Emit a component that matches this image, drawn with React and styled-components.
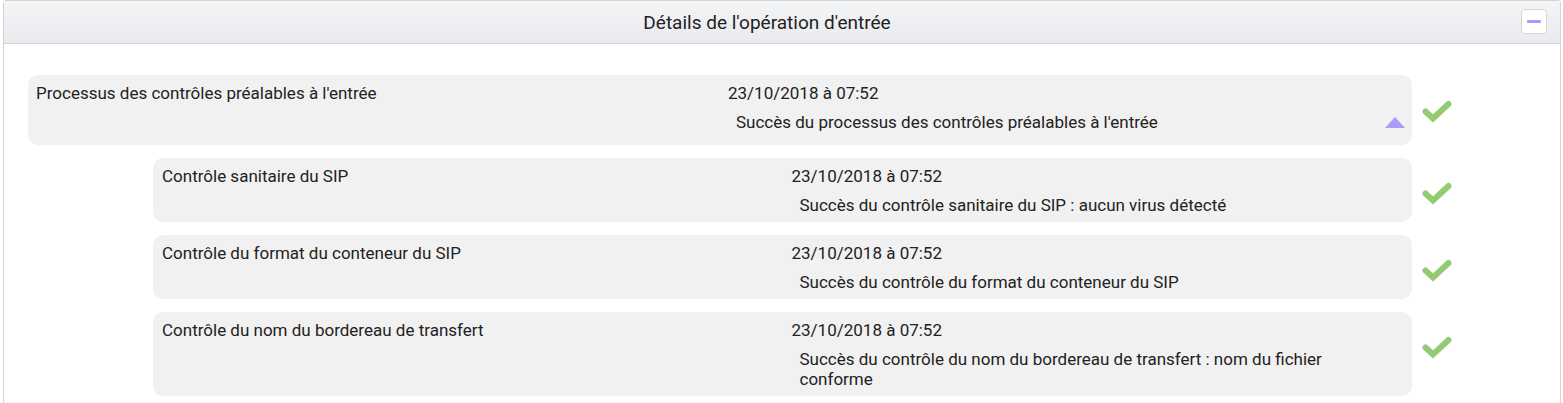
import React from "react";
import styled, { createGlobalStyle } from "styled-components";

const Global = createGlobalStyle`
  html, body { margin: 0; padding: 0; background: #fff; }
  body { font-family: Roboto, "Noto Sans", Arial, sans-serif; color: #222; }
`;

const Panel = styled.section`
  margin: 0 2px 0 3px;
  border: 1px solid #d4d4d4;
  border-radius: 3px 3px 0 0;
  background: #fff;
  min-height: 420px;
`;

const Header = styled.header`
  position: relative;
  height: 42px;
  padding-right: 30px;
  display: flex;
  align-items: center;
  justify-content: center;
  background: linear-gradient(#f4f5f7, #e9eaed);
  border-bottom: 1px solid #d2d2d2;
  font-size: 19px;
  color: #222;
`;

const Toggle = styled.button`
  position: absolute;
  right: 13px;
  top: 8px;
  width: 26px;
  height: 25px;
  padding: 0;
  border: 1px solid #d6d6d9;
  border-radius: 4px;
  background: #fff;
  display: flex;
  align-items: center;
  justify-content: center;
  &::before {
    content: "";
    width: 14px;
    height: 3px;
    border-radius: 1px;
    background: #a99cf8;
  }
`;

const Body = styled.div`
  padding: 31px 0 0 24px;
  display: flex;
  flex-direction: column;
  gap: 13px;
`;

const Entry = styled.div`
  display: flex;
  align-items: flex-start;
  margin-left: ${(p) => (p.$child ? "125px" : "0")};
  margin-right: 107px;
`;

const Card = styled.div`
  position: relative;
  flex: 1;
  display: grid;
  grid-template-columns: 1fr 1fr;
  background: #f1f1f1;
  border-radius: 10px;
  padding: 8px 0 ${(p) => (p.$expandable ? "13px" : "7px")} 0;
  font-size: 17px;
  line-height: 20px;
  color: #222;
`;

const Label = styled.div`
  padding-left: ${(p) => (p.$child ? "9px" : "8px")};
`;

const Detail = styled.div`
  padding-left: ${(p) => (p.$child ? "9px" : "8px")};
  padding-right: 40px;
`;

const Message = styled.div`
  margin: 9px 0 0 8px;
  white-space: pre-line;
`;

const Caret = styled.span`
  position: absolute;
  right: 7px;
  bottom: 17px;
  width: 0;
  height: 0;
  border-left: 10px solid transparent;
  border-right: 10px solid transparent;
  border-bottom: 11px solid #a99cf8;
`;

const Status = styled.div`
  width: 41px;
  margin-top: ${(p) => (p.$child ? "22px" : "23px")};
  display: flex;
  justify-content: flex-end;
`;

const Check = () => (
  <svg width="32" height="26" viewBox="0 0 32 26">
    <path
      d="M4.5 13.5 L12 20.5 L27.5 6"
      fill="none"
      stroke="#93cb73"
      strokeWidth="6"
      strokeLinecap="round"
      strokeLinejoin="miter"
    />
  </svg>
);

const entries = [
  {
    label: "Processus des contrôles préalables à l'entrée",
    date: "23/10/2018 à 07:52",
    message: "Succès du processus des contrôles préalables à l'entrée",
    expandable: true,
  },
  {
    label: "Contrôle sanitaire du SIP",
    date: "23/10/2018 à 07:52",
    message: "Succès du contrôle sanitaire du SIP : aucun virus détecté",
    child: true,
  },
  {
    label: "Contrôle du format du conteneur du SIP",
    date: "23/10/2018 à 07:52",
    message: "Succès du contrôle du format du conteneur du SIP",
    child: true,
  },
  {
    label: "Contrôle du nom du bordereau de transfert",
    date: "23/10/2018 à 07:52",
    message:
      "Succès du contrôle du nom du bordereau de transfert : nom du fichier\nconforme",
    child: true,
  },
];

export default function App() {
  return (
    <>
      <Global />
      <Panel>
        <Header>
          Détails de l'opération d'entrée
          <Toggle aria-label="Réduire" />
        </Header>
        <Body>
          {entries.map((e, i) => (
            <Entry key={i} $child={e.child}>
              <Card $expandable={e.expandable}>
                <Label $child={e.child}>{e.label}</Label>
                <Detail $child={e.child}>
                  <div>{e.date}</div>
                  <Message>{e.message}</Message>
                </Detail>
                {e.expandable && <Caret />}
              </Card>
              <Status $child={e.child}>
                <Check />
              </Status>
            </Entry>
          ))}
        </Body>
      </Panel>
    </>
  );
}
